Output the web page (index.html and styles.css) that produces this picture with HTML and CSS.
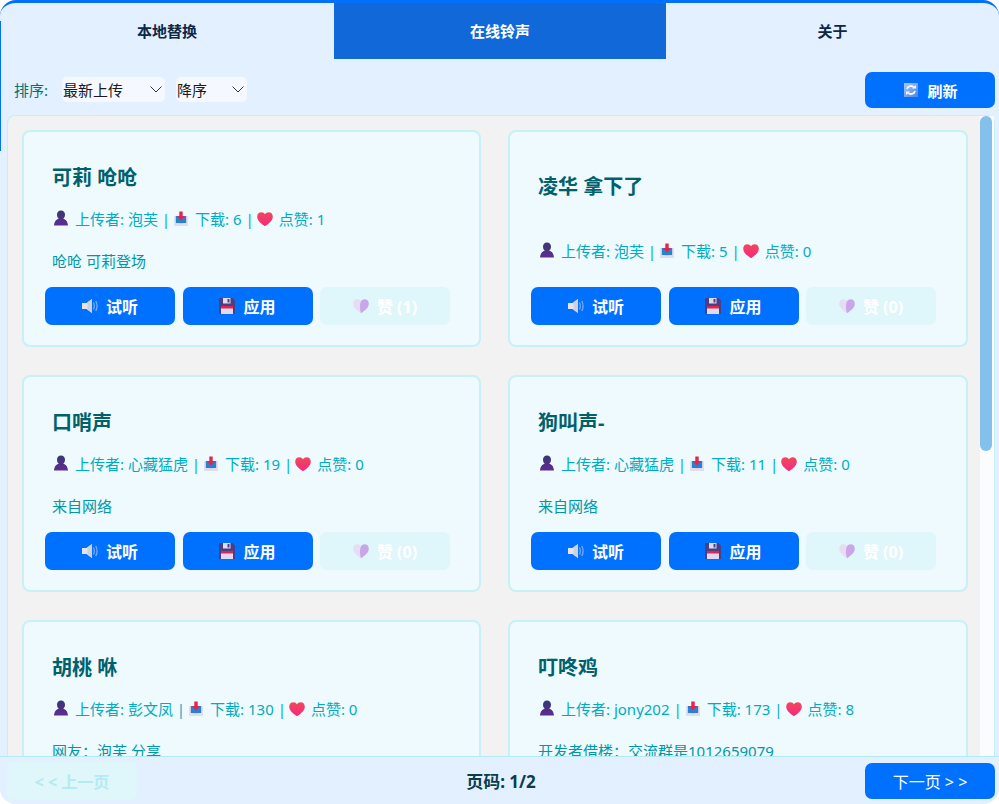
FILE: index.html
```html
<!DOCTYPE html>
<html lang="en">
<head>
    <meta charset="UTF-8">
    <meta name="viewport" content="width=device-width, initial-scale=1.0">
    <title>在线铃声</title>
    <link rel="stylesheet" href="styles.css">
</head>
<body>
    <!-- shared icons -->
    <svg class="icon-defs" width="0" height="0">
        <defs>
            <linearGradient id="heartFill" x1="0" y1="0" x2="0" y2="1">
                <stop offset="0" stop-color="#ee4a5c"/>
                <stop offset="1" stop-color="#f9267f"/>
            </linearGradient>
            <linearGradient id="userFill" x1="0" y1="0" x2="0" y2="1">
                <stop offset="0" stop-color="#37386f"/>
                <stop offset="1" stop-color="#5f2c94"/>
            </linearGradient>
            <linearGradient id="refreshFill" x1="0" y1="0" x2="1" y2="1">
                <stop offset="0" stop-color="#a9c8f5"/>
                <stop offset="1" stop-color="#4c86e0"/>
            </linearGradient>
            <symbol id="i-user" viewBox="0 0 16 16">
                <path d="M8 .5c2.500 0 4 1.800 4 4.200 0 1.800-.8 3.300-1.800 4.100 2.500.6 4.300 2.400 4.800 6.700H1c.5-4.300 2.300-6.100 4.800-6.700C4.800 8 4 6.500 4 4.700 4 2.300 5.500.5 8 .5z" fill="url(#userFill)"/>
            </symbol>
            <symbol id="i-inbox" viewBox="0 -1 16 16">
                <path d="M1.500 5h13v10h-13z" fill="#cfcde2"/>
                <path d="M3 5h10v7H3z" fill="#2a80d2"/>
                <path d="M1.500 12H6l1 1h2l1-1h4.500v3h-13z" fill="#dfdcec"/>
                <path d="M6.300.5h3.400V5H12L8 9.500 4 5h2.300z" fill="#e0264f"/>
            </symbol>
            <symbol id="i-heart" viewBox="0 -1 16 16">
                <path d="M8 15.200C3.800 12.200.2 9.600.2 5.400.2 2.800 2.200 1.200 4.300 1.200c1.600 0 3 .8 3.700 2.100.7-1.300 2.100-2.100 3.700-2.100 2.100 0 4.100 1.600 4.100 4.200 0 4.200-3.600 6.800-7.800 9.800z" fill="url(#heartFill)"/>
            </symbol>
            <symbol id="i-heart-pale" viewBox="0 0 16 16">
                <path d="M8 15.200C3.800 12.200.2 9.600.2 5.400.2 2.800 2.200 1.200 4.300 1.200c1.600 0 3 .8 3.700 2.100 1 3 1 8 0 11.900z" fill="#e6dcf3"/>
                <path d="M8 15.200c4.200-3 7.800-5.600 7.800-9.800 0-2.600-2-4.200-4.100-4.200-1.600 0-3 .8-3.700 2.100-1.600 3.500-1.200 8.500 0 11.900z" fill="#c9a6e8"/>
            </symbol>
            <symbol id="i-speaker" viewBox="0 0 16 16">
                <path d="M0 5h4.500L10 1v14l-5.500-4H0z" fill="#e4e4ea"/>
                <path d="M5.500 4.200 10 1v14l-4.500-3.200z" fill="#cfd0da"/>
                <path d="M11.500 4.500c1 2.200 1 4.800 0 7M13.800 3c1.500 3 1.500 7 0 10" fill="none" stroke="#76aaf0" stroke-width="1.300"/>
            </symbol>
            <symbol id="i-floppy" viewBox="0 0 16 16">
                <path d="M0 0h13.500L16 2.500V16H0z" fill="#4a3e84"/>
                <path d="M4 0h7.500v5.500H4z" fill="#dedbea"/>
                <path d="M8.500 1h2v3.500h-2z" fill="#4a3e84"/>
                <path d="M2 8h12v8H2z" fill="#e3d9ee"/>
                <path d="M2 8h12v2.500H2z" fill="#df2650"/>
            </symbol>
            <symbol id="i-refresh" viewBox="0 0 14 14">
                <rect width="14" height="14" fill="url(#refreshFill)"/>
                <path d="M3 6a4 4 0 0 1 7-1.500M11 8a4 4 0 0 1-7 1.500" fill="none" stroke="#f4f8ff" stroke-width="1.800"/>
                <path d="M8 5.500h4V2zM6 8.500H2V12z" fill="#f4f8ff"/>
            </symbol>
            <symbol id="i-chevron" viewBox="0 0 12 7">
                <path d="M.5.500 6 6 11.500.500" fill="none" stroke="#33383d" stroke-width="1"/>
            </symbol>
        </defs>
    </svg>

    <div class="window">
        <nav class="tabs">
            <div class="tab">本地替换</div>
            <div class="tab active">在线铃声</div>
            <div class="tab">关于</div>
        </nav>

        <div class="toolbar">
            <span class="sort-label">排序:</span>
            <div class="select select-wide"><span>最新上传</span><svg class="chevron"><use href="#i-chevron"/></svg></div>
            <div class="select select-narrow"><span>降序</span><svg class="chevron"><use href="#i-chevron"/></svg></div>
            <button class="btn btn-primary btn-refresh"><svg class="ico-14"><use href="#i-refresh"/></svg>刷新</button>
        </div>

        <div class="list">
            <div class="list-clip">
                <div class="grid">

                    <div class="card">
                        <h2 class="card-title">可莉 呛呛</h2>
                        <div class="meta">
                            <svg class="ico"><use href="#i-user"/></svg><span>上传者: 泡芙 |</span>
                            <svg class="ico"><use href="#i-inbox"/></svg><span>下载: 6 |</span>
                            <svg class="ico"><use href="#i-heart"/></svg><span>点赞: 1</span>
                        </div>
                        <p class="desc">呛呛 可莉登场</p>
                        <div class="actions">
                            <button class="btn btn-primary"><svg class="ico"><use href="#i-speaker"/></svg>试听</button>
                            <button class="btn btn-primary"><svg class="ico"><use href="#i-floppy"/></svg>应用</button>
                            <button class="btn btn-like"><svg class="ico"><use href="#i-heart-pale"/></svg>赞 (1)</button>
                        </div>
                    </div>

                    <div class="card card-nodesc">
                        <h2 class="card-title">凌华 拿下了</h2>
                        <div class="meta">
                            <svg class="ico"><use href="#i-user"/></svg><span>上传者: 泡芙 |</span>
                            <svg class="ico"><use href="#i-inbox"/></svg><span>下载: 5 |</span>
                            <svg class="ico"><use href="#i-heart"/></svg><span>点赞: 0</span>
                        </div>
                        <div class="actions">
                            <button class="btn btn-primary"><svg class="ico"><use href="#i-speaker"/></svg>试听</button>
                            <button class="btn btn-primary"><svg class="ico"><use href="#i-floppy"/></svg>应用</button>
                            <button class="btn btn-like"><svg class="ico"><use href="#i-heart-pale"/></svg>赞 (0)</button>
                        </div>
                    </div>

                    <div class="card">
                        <h2 class="card-title">口哨声</h2>
                        <div class="meta">
                            <svg class="ico"><use href="#i-user"/></svg><span>上传者: 心藏猛虎 |</span>
                            <svg class="ico"><use href="#i-inbox"/></svg><span>下载: 19 |</span>
                            <svg class="ico"><use href="#i-heart"/></svg><span>点赞: 0</span>
                        </div>
                        <p class="desc">来自网络</p>
                        <div class="actions">
                            <button class="btn btn-primary"><svg class="ico"><use href="#i-speaker"/></svg>试听</button>
                            <button class="btn btn-primary"><svg class="ico"><use href="#i-floppy"/></svg>应用</button>
                            <button class="btn btn-like"><svg class="ico"><use href="#i-heart-pale"/></svg>赞 (0)</button>
                        </div>
                    </div>

                    <div class="card">
                        <h2 class="card-title">狗叫声-</h2>
                        <div class="meta">
                            <svg class="ico"><use href="#i-user"/></svg><span>上传者: 心藏猛虎 |</span>
                            <svg class="ico"><use href="#i-inbox"/></svg><span>下载: 11 |</span>
                            <svg class="ico"><use href="#i-heart"/></svg><span>点赞: 0</span>
                        </div>
                        <p class="desc">来自网络</p>
                        <div class="actions">
                            <button class="btn btn-primary"><svg class="ico"><use href="#i-speaker"/></svg>试听</button>
                            <button class="btn btn-primary"><svg class="ico"><use href="#i-floppy"/></svg>应用</button>
                            <button class="btn btn-like"><svg class="ico"><use href="#i-heart-pale"/></svg>赞 (0)</button>
                        </div>
                    </div>

                    <div class="card">
                        <h2 class="card-title">胡桃 咻</h2>
                        <div class="meta">
                            <svg class="ico"><use href="#i-user"/></svg><span>上传者: 彭文凤 |</span>
                            <svg class="ico"><use href="#i-inbox"/></svg><span>下载: 130 |</span>
                            <svg class="ico"><use href="#i-heart"/></svg><span>点赞: 0</span>
                        </div>
                        <p class="desc">网友：泡芙 分享</p>
                    </div>

                    <div class="card">
                        <h2 class="card-title">叮咚鸡</h2>
                        <div class="meta">
                            <svg class="ico"><use href="#i-user"/></svg><span>上传者: jony202 |</span>
                            <svg class="ico"><use href="#i-inbox"/></svg><span>下载: 173 |</span>
                            <svg class="ico"><use href="#i-heart"/></svg><span>点赞: 8</span>
                        </div>
                        <p class="desc">开发者借楼：交流群是1012659079</p>
                    </div>

                </div>
            </div>
            <div class="scrollbar"><div class="scroll-thumb"></div></div>
        </div>

        <div class="pager">
            <button class="btn btn-prev">&lt; &lt; 上一页</button>
            <span class="page-no">页码: 1/2</span>
            <button class="btn btn-primary btn-next">下一页 &gt; &gt;</button>
        </div>
    </div>
</body>
</html>
```

FILE: styles.css
```css
html, body {
    margin: 0;
    padding: 0;
    background-color: #fff;
}

body {
    font-family: "Noto Sans", "Noto Sans CJK SC", sans-serif;
}

.icon-defs {
    position: absolute;
}

.window {
    position: relative;
    width: 999px;
    height: 804px;
    box-sizing: border-box;
    display: flex;
    flex-direction: column;
    overflow: hidden;
    background-color: #e3f0ff;
    border-top: 3px solid #0070ff;
    border-radius: 16px;
}

/* sliver of the app behind the window */
.window::before {
    content: "";
    position: absolute;
    left: 0;
    top: 18px;
    width: 1px;
    height: 130px;
    background-color: #0070ff;
}

/* tabs */
.tabs {
    display: grid;
    grid-template-columns: 334px 332px 333px;
    height: 56px;
    flex: none;
}

.tab {
    display: flex;
    align-items: center;
    justify-content: center;
    padding-bottom: 2px;
    font-size: 15px;
    font-weight: 700;
    color: #0d2847;
}

.tab.active {
    background-color: #1169d9;
    color: #fff;
}

/* sort bar */
.toolbar {
    display: flex;
    align-items: center;
    height: 56px;
    flex: none;
    box-sizing: border-box;
    padding: 4px 4px 0 14px;
    font-size: 15px;
}

.sort-label {
    color: #00707c;
    width: 48px;
}

.select {
    display: flex;
    align-items: center;
    justify-content: space-between;
    box-sizing: border-box;
    height: 25px;
    padding: 0 3px 0 1px;
    margin-top: 1px;
    background-color: #f5f9ff;
    border-radius: 5px;
    color: #1a1a1a;
}

.select-wide {
    width: 103px;
    margin-right: 11px;
}

.select-narrow {
    width: 71px;
}

.chevron {
    width: 12px;
    height: 7px;
}

/* buttons */
.btn {
    display: flex;
    align-items: center;
    justify-content: center;
    gap: 8px;
    width: 130px;
    height: 38px;
    padding: 0;
    border: none;
    border-radius: 7px;
    font-family: inherit;
    font-size: 16px;
    font-weight: 700;
    color: #fff;
}

.btn-primary {
    background-color: #0070ff;
}

.btn-like {
    background-color: #dff6fa;
}

.btn-refresh {
    margin-left: auto;
    margin-top: 2px;
    padding-left: 2px;
    height: 36px;
    font-size: 15px;
    gap: 9px;
}

.ico {
    width: 16px;
    height: 16px;
    flex: none;
}

.ico-14 {
    width: 14px;
    height: 14px;
    flex: none;
}

/* song list */
.list {
    display: flex;
    flex: 1;
    min-height: 0;
    margin: 0 4px 0 7px;
    background-color: #f2f2f2;
    border: 1px solid #c5eef8;
    border-bottom: none;
    border-radius: 8px 8px 0 0;
}

.list-clip {
    flex: 1;
    min-width: 0;
    overflow: hidden;
}

.grid {
    display: grid;
    grid-template-columns: 459px 460px;
    column-gap: 27px;
    row-gap: 28px;
    padding: 14px 0 0 14px;
}

.scrollbar {
    width: 14px;
    flex: none;
    background-color: #fbfcfd;
}

.scroll-thumb {
    width: 12px;
    height: 335px;
    background-color: #83c1ec;
    border-radius: 6px;
}

.card {
    box-sizing: border-box;
    height: 217px;
    padding: 32px 21px 0;
    background-color: #eefafd;
    border: 2px solid #c8f0f7;
    border-radius: 8px;
}

.card-title {
    margin: 0 0 16px 7px;
    font-size: 20px;
    line-height: 28px;
    font-weight: 700;
    color: #00606b;
}

.card-nodesc .card-title {
    margin-top: 9px;
    margin-bottom: 39px;
}

.card-nodesc .actions {
    margin-top: 27px;
}

.meta {
    display: flex;
    align-items: center;
    height: 20px;
    margin-left: 8px;
    font-size: 15px;
    color: #00acc1;
    white-space: nowrap;
}

.meta span {
    margin: 0 3px 0 6px;
}

.desc {
    margin: 23px 0 16px 7px;
    font-size: 15px;
    line-height: 20px;
    color: #0097a7;
}

.actions {
    display: grid;
    grid-template-columns: repeat(3, 130px);
    column-gap: 7.5px;
}

/* footer */
.pager {
    display: flex;
    align-items: center;
    justify-content: space-between;
    position: relative;
    height: 48px;
    flex: none;
    box-sizing: border-box;
    padding: 0 4px 0 7px;
    background-color: #e3f0ff;
    border-top: 1px solid #b2ebf2;
}

.btn-prev {
    background-color: #dff6fa;
    color: #b2ebf2;
}

.btn-next {
    height: 36px;
    font-weight: 400;
}

.page-no {
    font-size: 17px;
    font-weight: 700;
    color: #0d3d4a;
}
```
